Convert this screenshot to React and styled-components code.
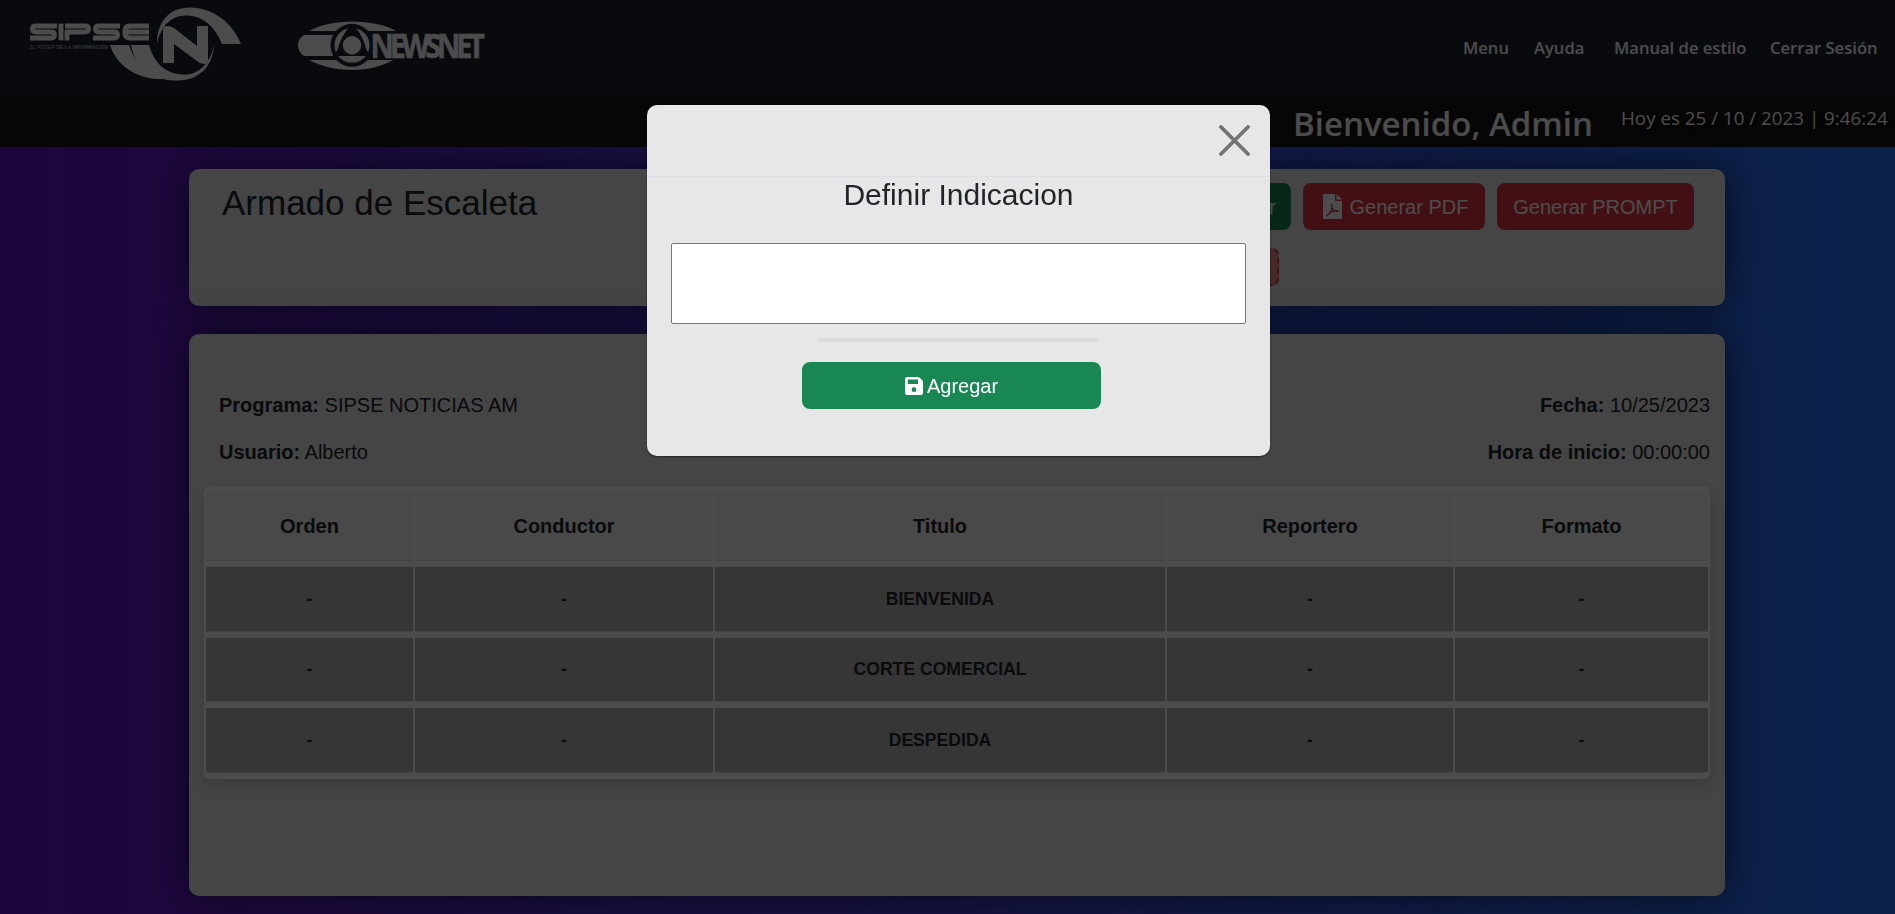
import React from "react";
import styled, { createGlobalStyle, css } from "styled-components";

const arial = '"Liberation Sans", Arial, sans-serif';
const segoe = '"Open Sans", "Noto Sans", sans-serif';
const headerColor = "#1f232e";

const GlobalStyle = createGlobalStyle`
  *, *::before, *::after { box-sizing: border-box; }
  html, body { height: 100%; }
  body {
    margin: 0;
    overflow: hidden;
    font-family: ${arial};
    font-size: 20px;
    line-height: 1.5;
    color: #212529;
    background: linear-gradient(to right, #6a11cb, #2575fc);
  }
`;

const Page = styled.div`
  display: flex;
  flex-direction: column;
  height: 914px;
`;

const Header = styled.header`
  display: flex;
  justify-content: space-between;
  align-items: center;
  height: 97px;
  flex: none;
  padding: 0 19px 0 28px;
  background: ${headerColor};
`;

const Logos = styled.div`
  display: flex;
  align-items: center;
  height: 97px;
`;

const SipseLogo = styled.svg`
  width: 216px;
  height: 97px;
  margin-right: 54px;
  display: block;
`;

const NewsnetLogo = styled.svg`
  width: 196px;
  height: 97px;
  display: block;
  overflow: visible;
`;

const Nav = styled.nav`
  display: flex;
  padding-bottom: 2px;
  font: 600 16.6px/24px ${segoe};
  color: #fff;
`;

const NavItem = styled.a`
  margin-left: ${(p) => p.$gap}px;
  width: ${(p) => p.$w}px;
  white-space: nowrap;
  color: #fff;
`;

const WelcomeBar = styled.div`
  display: flex;
  justify-content: flex-end;
  height: 50px;
  flex: none;
  padding-right: 7px;
  background: #171717;
  color: #fff;
  white-space: nowrap;
`;

const Welcome = styled.h2`
  margin: 3px 28px 0 0;
  width: 300px;
  font: 600 33px/48px ${segoe};
`;

const Clock = styled.span`
  width: 267px;
  margin-top: 6px;
  font: 400 18.8px/30px ${segoe};
  text-shadow: 2px 2px 4px #000;
`;

const Card = styled.section`
  width: 1536px;
  margin-left: 189px;
  flex: none;
  border-radius: 10px;
  background: #e6e6e6;
  box-shadow: 0 0 40px rgba(0, 0, 0, 0.6);
`;

const TitleCard = styled(Card)`
  display: flex;
  justify-content: space-between;
  height: 137px;
  margin-top: 22px;
  padding: 12px 31px 0 33px;
`;

const Title = styled.h1`
  margin: 0;
  font: 400 35px/44px ${arial};
`;

const Actions = styled.div`
  display: flex;
  flex-direction: column;
  align-items: flex-start;
  gap: 18px;
  padding-top: 2px;
`;

const ButtonRow = styled.div`
  display: flex;
  gap: 12px;
`;

const Button = styled.button`
  display: flex;
  align-items: center;
  justify-content: center;
  gap: ${(p) => p.$gap || 0}px;
  width: ${(p) => p.$w}px;
  height: 47px;
  padding: ${(p) => p.$pad || "0"};
  border: 0;
  border-radius: 8px;
  font: 400 20px/30px ${arial};
  color: #fff;
  background: ${(p) => (p.$tone === "success" ? "#198754" : "#dc3545")};
  svg { flex: none; }
`;

const DropZone = styled.div`
  width: 92px;
  height: 38px;
  border: 2px dashed #dc3545;
  border-radius: 7px;
  background: #e98b8d;
`;

const RundownCard = styled(Card)`
  height: 562px;
  margin-top: 28px;
  padding: 48px 15px 0 15px;
`;

const InfoRow = styled.div`
  display: flex;
  justify-content: space-between;
  height: 47px;
  padding: 8px 0 0 15px;
`;

const Info = styled.p`
  margin: 0;
  line-height: 30px;
`;

const Table = styled.div`
  display: grid;
  grid-template-columns: 207px 298px 450px 286px 253px;
  column-gap: 2px;
  row-gap: 6px;
  margin-top: 10px;
  padding: 6px 2px;
  border-radius: 6px;
  background: #fff;
  box-shadow: 0 8px 16px rgba(0, 0, 0, 0.15);
`;

const cell = css`
  display: flex;
  align-items: center;
  justify-content: center;
  font-weight: 700;
`;

const HeadCell = styled.div`
  ${cell}
  height: 69px;
  border-bottom: 1px solid #dee2e6;
  background: #f5f5f5;
  font-size: 20px;
`;

const Cell = styled.div`
  ${cell}
  height: ${(p) => p.$h}px;
  border-bottom: 1px solid #dee2e6;
  background: #b4b4b4;
  font-size: 17.6px;
`;

const Backdrop = styled.div`
  position: fixed;
  inset: 0;
  display: flex;
  justify-content: center;
  align-items: flex-start;
  padding: 105px 0 0 22px;
  background: rgba(0, 0, 0, 0.7);
`;

const Dialog = styled.div`
  width: 623px;
  height: 351px;
  border-radius: 10px;
  background: #e7e7e7;
  box-shadow: 0 1px 2px rgba(0, 0, 0, 0.5);
  display: flex;
  flex-direction: column;
`;

const DialogHeader = styled.div`
  display: flex;
  justify-content: flex-end;
  height: 72px;
  padding: 20px 20px 0 0;
  border-bottom: 1px solid #dee0e8;
`;

const CloseButton = styled.button`
  width: 31px;
  height: 31px;
  padding: 0;
  border: 0;
  background: none;
  svg { display: block; }
`;

const DialogBody = styled.div`
  display: flex;
  flex-direction: column;
  align-items: center;
  padding: 0 24px;
`;

const DialogTitle = styled.h3`
  margin: 0;
  font: 400 30px/36px ${arial};
`;

const TextArea = styled.textarea`
  display: block;
  width: 575px;
  height: 81px;
  margin-top: 30px;
  resize: none;
  border: 1px solid #767676;
  border-radius: 2px;
  background: #fff;
`;

const Divider = styled.div`
  width: 282px;
  height: 4px;
  margin: 14px 1px 0 0;
  border-radius: 0 0 4px 4px;
  background: #dcdcdc;
`;

const SaveSlot = styled.div`
  margin: 20px 14px 0 0;
`;

const columns = ["Orden", "Conductor", "Titulo", "Reportero", "Formato"];
const rows = [
  { title: "BIENVENIDA", height: 65 },
  { title: "CORTE COMERCIAL", height: 64 },
  { title: "DESPEDIDA", height: 65 },
];

function Sipse() {
  return (
    <SipseLogo viewBox="28 0 216 97" fill="#fff" aria-label="SIPSE">
      <g fill="none" stroke="#fff" strokeWidth="4.9" strokeLinejoin="round">
        <path d="M57 26H36Q32.500 26 32.500 29Q32.500 32 36 32H51Q54.500 32 54.500 35Q54.500 38 51 38H30" />
        <path d="M61 23.600V40.400" />
        <path d="M67 40.400V32H85Q88.500 32 88.500 29Q88.500 26 85 26H65" />
        <path d="M120 26H99Q95.500 26 95.500 29Q95.500 32 99 32H114Q117.500 32 117.500 35Q117.500 38 114 38H93" />
        <path d="M149 26H130Q124.800 26 124.800 32Q124.800 38 130 38H149M125 32H149" />
      </g>
      <text x="30" y="48.600" fontFamily="Liberation Sans" fontSize="4.7" textLength="78" opacity=".6">
        EL PODER <tspan fontWeight="700">DE LA INFORMACIÓN</tspan>
      </text>
      <path d="M157 44C157 22 169 7.500 190 7.500C214 7.500 233 24 241 44H222C216 29 205 16 187 15.500C171 15 161 26 157 44Z" />
      <path d="M110 45H129C133 57 139 66 149 72C138 67 133 56 131 45H149C153 59 162 73 182 74.500C198 76 210 64 214 45C213 66 199 80.500 178 80.500Q169 80.500 163 79C137 80 116 65 110 45Z" />
      <path d="M163 63V30Q163 26 167 26Q171 26 174 28L197 46V26H208V60Q208 64 204 64Q200 64 197 61L174 44V63Z" />
    </SipseLogo>
  );
}

function Newsnet() {
  return (
    <NewsnetLogo viewBox="298 0 196 97" aria-label="NEWSNET">
      <g fill="#fff">
        <path d="M309 31C320 25 336 21.500 352 21.500C369 21.500 386 25 396 31Z" />
        <path d="M309 60C320 66 336 70 352 70C368 70 383 66 393 60Z" />
        <path d="M304 35H345V56H304Q298 52 298 45Q298 39 304 35Z" />
        <circle cx="352" cy="45.300" r="21.500" fill={headerColor} />
        <circle cx="352" cy="45.300" r="17.500" />
        <path d="M350 26Q341 36 337.500 50L333 55.500V56H371V55.500L366.500 50Q363 36 354.500 26Z" fill={headerColor} />
        <circle cx="352" cy="45.300" r="9.200" />
      </g>
      <text
        transform="translate(370.500 57.500) scale(.86 1)"
        fill="#fff"
        stroke="#fff"
        strokeWidth=".4"
        fontFamily="Open Sans"
        fontWeight="700"
        fontSize="33.500"
        textLength="133"
        lengthAdjust="spacing"
      >
        NEWSNET
      </text>
    </NewsnetLogo>
  );
}

function PdfIcon() {
  return (
    <svg width="19" height="25" viewBox="0 0 19 25">
      <path fill="#fff" d="M0 0H12V7H19V25H0ZM13.500 0L19 5.500H13.500Z" />
      <path
        fill="none"
        stroke="#dc3545"
        strokeWidth="1.3"
        strokeLinecap="round"
        d="M8.800 10.500Q9.800 13.500 8.200 17Q6 21 3.500 21.700M8.800 10.500Q8 13.500 11 16.500Q13 18 15.300 17.300Q13.500 15.500 6.500 18.500"
      />
    </svg>
  );
}

function SaveIcon() {
  return (
    <svg width="18" height="18" viewBox="0 0 18 18" fill="#fff">
      <path fillRule="evenodd" d="M2 0H12.800Q14 0 15 1L17 3Q18 4 18 5.200V16Q18 18 16 18H2Q0 18 0 16V2Q0 0 2 0ZM2.800 2.600V7H13V2.600ZM9 10.300A2.400 2.400 0 1 0 9 15.100A2.400 2.400 0 1 0 9 10.300Z" />
    </svg>
  );
}

export default function App() {
  return (
    <>
      <GlobalStyle />
      <Page>
        <Header>
          <Logos>
            <Sipse />
            <Newsnet />
          </Logos>
          <Nav>
            <NavItem $gap={0} $w={46}>Menu</NavItem>
            <NavItem $gap={25} $w={51}>Ayuda</NavItem>
            <NavItem $gap={29} $w={132}>Manual de estilo</NavItem>
            <NavItem $gap={24} $w={106}>Cerrar Sesión</NavItem>
          </Nav>
        </Header>
        <WelcomeBar>
          <Welcome>Bienvenido, Admin</Welcome>
          <Clock>Hoy es 25 / 10 / 2023 | 9:46:24</Clock>
        </WelcomeBar>
        <TitleCard>
          <Title>Armado de Escaleta</Title>
          <Actions>
            <ButtonRow>
              <Button $tone="success" $w={104}>Guardar</Button>
              <Button $w={182} $gap={8} $pad="0 0 0 3px">
                <PdfIcon />
                <span>Generar PDF</span>
              </Button>
              <Button $w={197}>Generar PROMPT</Button>
            </ButtonRow>
            <DropZone />
          </Actions>
        </TitleCard>
        <RundownCard>
          <InfoRow>
            <Info><b>Programa:</b> SIPSE NOTICIAS AM</Info>
            <Info><b>Fecha:</b> 10/25/2023</Info>
          </InfoRow>
          <InfoRow>
            <Info><b>Usuario:</b> Alberto</Info>
            <Info><b>Hora de inicio:</b> 00:00:00</Info>
          </InfoRow>
          <Table>
            {columns.map((name) => (
              <HeadCell key={name}>{name}</HeadCell>
            ))}
            {rows.map((row) =>
              columns.map((name) => (
                <Cell key={row.title + name} $h={row.height}>
                  {name === "Titulo" ? row.title : "-"}
                </Cell>
              ))
            )}
          </Table>
        </RundownCard>
      </Page>
      <Backdrop>
        <Dialog>
          <DialogHeader>
            <CloseButton aria-label="Cerrar">
              <svg width="31" height="31" viewBox="0 0 31 31" stroke="#737373" strokeWidth="3.800" strokeLinecap="round">
                <path d="M2 2L29 29M29 2L2 29" />
              </svg>
            </CloseButton>
          </DialogHeader>
          <DialogBody>
            <DialogTitle>Definir Indicacion</DialogTitle>
            <TextArea />
            <Divider />
            <SaveSlot>
              <Button $tone="success" $w={299} $gap={4}>
                <SaveIcon />
                <span>Agregar</span>
              </Button>
            </SaveSlot>
          </DialogBody>
        </Dialog>
      </Backdrop>
    </>
  );
}
